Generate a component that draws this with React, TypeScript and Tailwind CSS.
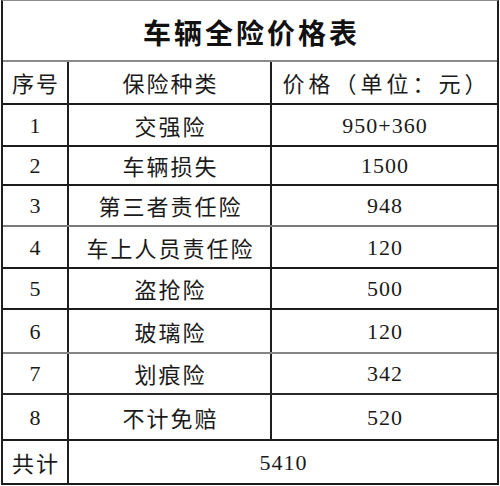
import React from "react";

const cjk = { fontFamily: '"Noto Sans CJK SC", "Noto Sans", sans-serif' };
const num = { fontFamily: '"Liberation Serif", "Noto Sans CJK SC", serif' };

const rows = [
  { no: "1", name: "交强险", price: "950+360", h: "h-[42px]", line: "border-[#1c1c1c]" },
  { no: "2", name: "车辆损失", price: "1500", h: "h-[39px]", line: "border-[#1c1c1c]" },
  { no: "3", name: "第三者责任险", price: "948", h: "h-[41px]", line: "border-[#7a7a7a]" },
  { no: "4", name: "车上人员责任险", price: "120", h: "h-[42px]", line: "border-[#1c1c1c]" },
  { no: "5", name: "盗抢险", price: "500", h: "h-[41px]", line: "border-[#1c1c1c]" },
  { no: "6", name: "玻璃险", price: "120", h: "h-[44px]", line: "border-[#858585]" },
  { no: "7", name: "划痕险", price: "342", h: "h-[41px]", line: "border-[#2a2a2a]" },
  { no: "8", name: "不计免赔", price: "520", h: "h-[46px]", line: "border-[#1c1c1c]" },
];

export default function App() {
  return (
    <div className="w-[500px] h-[486px] bg-white text-[#1a1a1a]">
      <div className="ml-[1px] w-[498px] border-t border-[#8c8c8c] border-x-2 border-x-[#1e1e1e]">
        {/* TITLE */}
        <div
          className="h-[61px] flex items-center justify-center pt-[3px] border-b-2 border-[#8a8a8a] text-[28px] font-bold tracking-[3px] pl-[3px] text-[#111]"
          style={cjk}
        >
          车辆全险价格表
        </div>

        {/* HEADER */}
        <div className="flex h-[43px] border-b-2 border-[#1c1c1c] text-[22px]" style={cjk}>
          <div className="w-[64px] flex items-center justify-center tracking-[2px] pl-[2px]">
            序号
          </div>
          <div className="w-[203px] border-l-2 border-[#1e1e1e] flex items-center justify-center tracking-[2px] pl-[2px]">
            保险种类
          </div>
          <div className="w-[227px] border-l-2 border-[#1e1e1e] flex items-center justify-center tracking-[4px] pl-[4px]">
            价格（单位：元）
          </div>
        </div>

        {/* ROWS */}
        {rows.map((r) => (
          <div key={r.no} className={`flex border-b-2 ${r.h} ${r.line}`}>
            <div className="w-[64px] flex items-center justify-center text-[22px]" style={num}>
              {r.no}
            </div>
            <div
              className="w-[203px] border-l-2 border-[#1e1e1e] flex items-center justify-center text-[22px] tracking-[2px] pl-[2px]"
              style={cjk}
            >
              {r.name}
            </div>
            <div
              className="w-[227px] border-l-2 border-[#1e1e1e] flex items-center justify-center text-[22px] tracking-[1px] pl-[1px]"
              style={num}
            >
              {r.price}
            </div>
          </div>
        ))}

        {/* TOTAL */}
        <div className="flex h-[44px] border-b-2 border-[#1c1c1c]">
          <div
            className="w-[64px] flex items-center justify-center text-[22px] tracking-[2px] pl-[2px]"
            style={cjk}
          >
            共计
          </div>
          <div
            className="w-[430px] border-l-2 border-[#1e1e1e] flex items-center justify-center text-[22px] tracking-[1px] pl-[1px]"
            style={num}
          >
            5410
          </div>
        </div>
      </div>
    </div>
  );
}
